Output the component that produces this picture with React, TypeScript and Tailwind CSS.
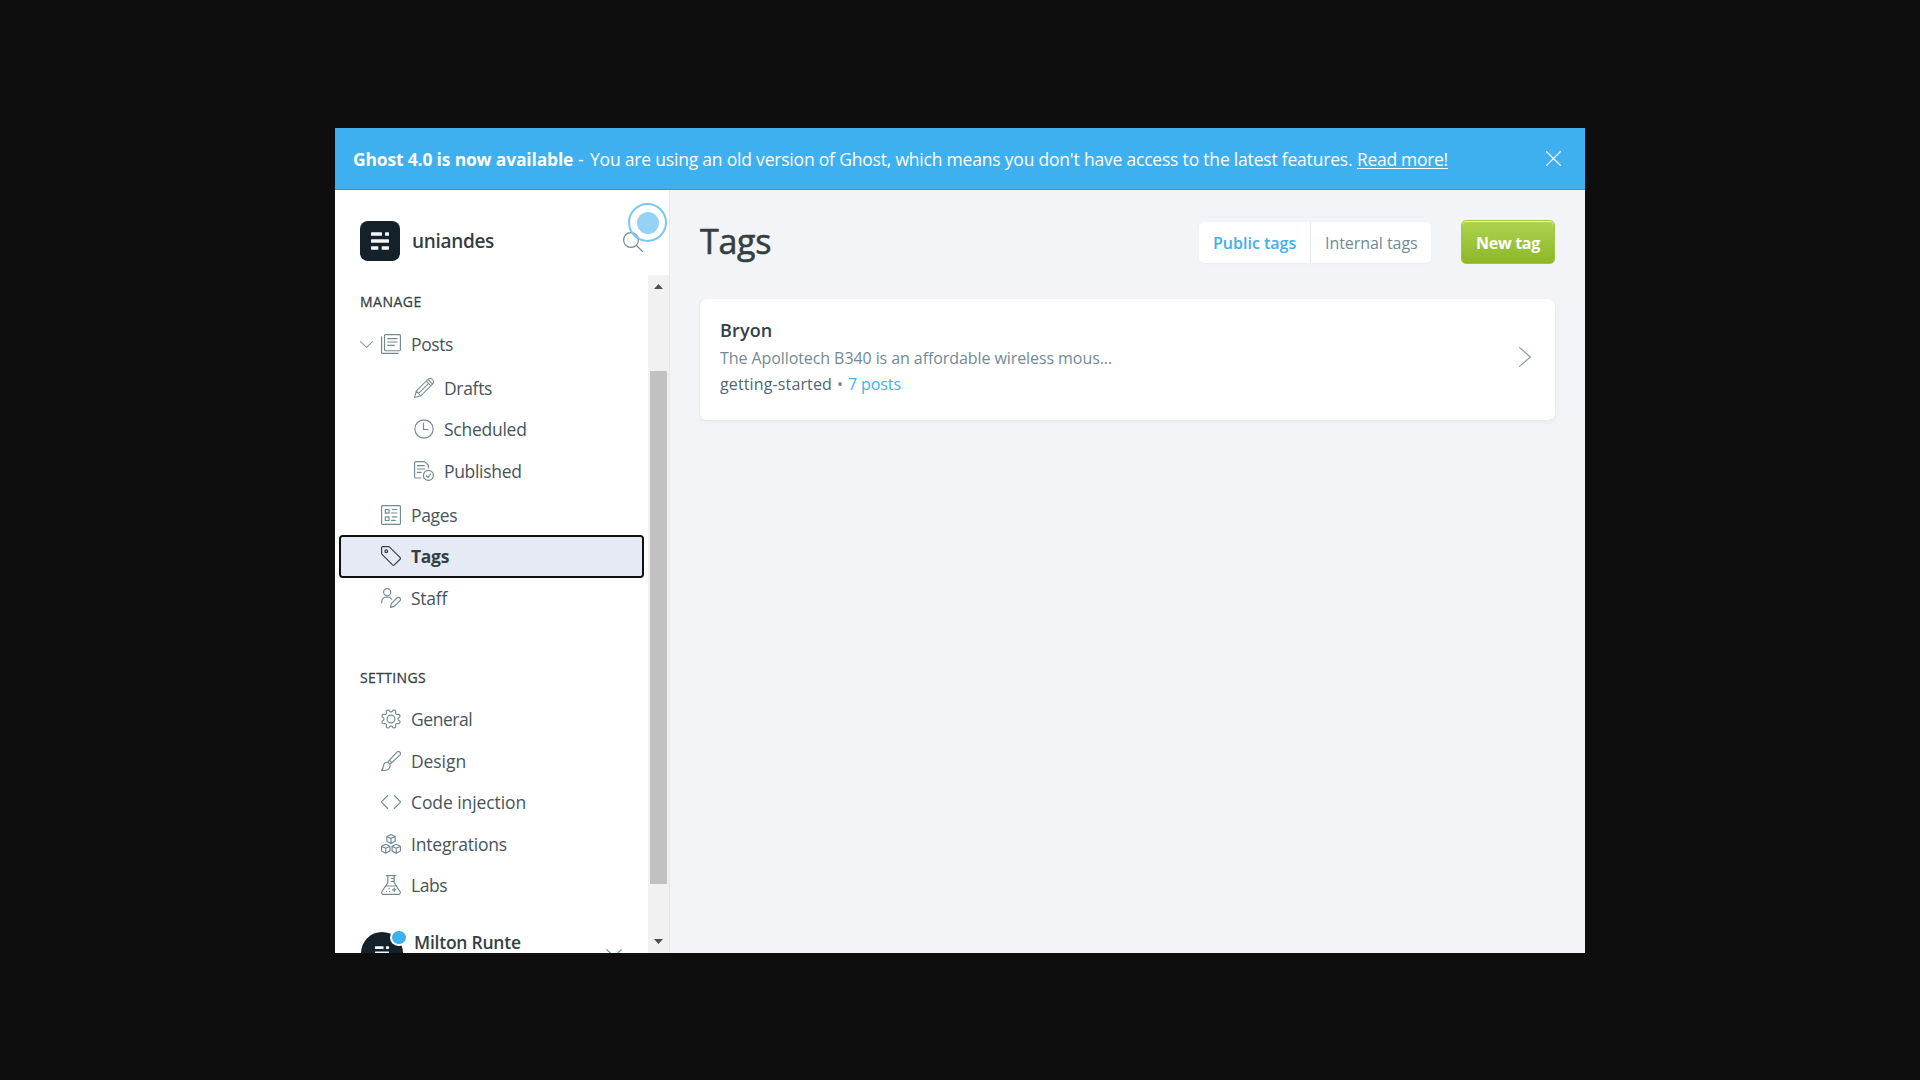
import type { ReactNode } from "react";

function Icon({ children, className = "" }: { children: ReactNode; className?: string }) {
  return (
    <svg
      viewBox="0 0 24 24"
      fill="none"
      stroke="currentColor"
      strokeWidth="1.4"
      strokeLinecap="round"
      strokeLinejoin="round"
      className={"size-5 shrink-0 " + className}
    >
      {children}
    </svg>
  );
}

const PostsIcon = () => (
  <Icon>
    <rect x="4.2" y=".7" width="19.100" height="19.400" rx="1.2" />
    <path d="M.7 3.4V21.800a1.5 1.5 0 0 0 1.5 1.5H20.6M8 5.600h11.400M8 9.600h11.400M8 13.600h8" />
  </Icon>
);

const PencilIcon = () => (
  <Icon>
    <path
      strokeWidth="1.25"
      d="M22.200 1.800a3.900 3.900 0 0 0-5.600 0L2.700 15.700.7 23.300l7.600-2L22.200 7.400a3.900 3.900 0 0 0 0-5.600zM14.700 3.700l5.600 5.600M16.700 1.700l5.600 5.600M2.700 15.700l5.600 5.600M17.500 6.500 5.500 18.500"
    />
  </Icon>
);

const ClockIcon = () => (
  <Icon>
    <circle cx="12" cy="12" r="11" />
    <path d="M11.400 5.200v7.400h5.200" />
  </Icon>
);

const PublishedIcon = () => (
  <Icon>
    <path d="M8.200 20.400H2.100A1.400 1.400 0 0 1 .7 19V2.100A1.400 1.400 0 0 1 2.100.7h10.800l4.300 4.300v3.200M4 5.600h8.400M4 9.600h9M4 13.600h4.600" />
    <circle cx="17.300" cy="17.300" r="6" />
    <path d="m20.200 15.600-3.300 4-2.300-1.900" />
  </Icon>
);

const PagesIcon = () => (
  <Icon>
    <rect x=".7" y=".7" width="22.600" height="22.600" rx="1" />
    <path d="M5.200 5.400h4.400v4.400H5.200zM5.200 14.200h4.400v4.400H5.200zM13.400 5.400h5.600M12.400 9.600h6.800M13.400 14.200h5.600M12.400 18.400h4.800" />
  </Icon>
);

const TagIcon = () => (
  <Icon>
    <path d="M.7 2.200V8.600a2 2 0 0 0 .6 1.400l12.500 12.700a1.600 1.600 0 0 0 2.200 0l6.800-6.800a1.600 1.600 0 0 0 0-2.200L10.300 1.300A2 2 0 0 0 8.900.7H2.200A1.500 1.500 0 0 0 .7 2.200z" />
    <circle cx="6.300" cy="6.300" r="1.600" />
  </Icon>
);

const StaffIcon = () => (
  <Icon>
    <circle cx="7.400" cy="5" r="4.300" />
    <path d="M.7 17.800c0-4.600 2.900-7.200 6.700-7.200 2.400 0 4.400 1 5.600 2.900M22.600 12a2.500 2.500 0 0 0-3.600 0l-6.500 6.700-1.300 4.600 4.700-1.300 6.700-6.500a2.500 2.500 0 0 0 0-3.500z" />
  </Icon>
);

// Eight rounded teeth, with a notch facing straight up.
const GEAR =
  "M" +
  Array.from({ length: 160 }, (_, i) => {
    const a = (i / 160) * Math.PI * 2;
    const r = 10 + 1.45 * Math.tanh(-2.2 * Math.cos(8 * a));
    return `${(12 + r * Math.sin(a)).toFixed(2)} ${(12 - r * Math.cos(a)).toFixed(2)}`;
  }).join("L") +
  "Z";

const GearIcon = () => (
  <Icon>
    <circle cx="12" cy="12" r="4.700" />
    <path d={GEAR} />
  </Icon>
);

const BrushIcon = () => (
  <Icon>
    <path d="M22.600 1.400a2.500 2.500 0 0 0-3.500 0l-9 9.500 3 3L22.600 4.900a2.500 2.500 0 0 0 0-3.500zM10.100 10.900l-1.900 2.600 2.300 2.300 2.600-1.900M8.200 13.500c-2.500-.2-4.700 1.300-5.100 3.800-.3 2.200-.9 4.500-2.400 5.700 2.400.5 6.200.4 8.200-1.300 1.800-1.500 2.400-3.800 1.600-5.900" />
  </Icon>
);

const CodeIcon = () => (
  <Icon>
    <path d="M8 4.200.8 11.600a.6.6 0 0 0 0 .8L8 19.800M16 4.200l7.200 7.400a.6.6 0 0 1 0 .8L16 19.800" />
  </Icon>
);

const CUBE = "m0-5.300 5 2.300v5.800L0 5.300l-5-2.500V-3zM-5-3 0-.700 5-3M0-.700v6";
const CubesIcon = () => (
  <Icon>
    <path d={CUBE} transform="translate(12 6)" />
    <path d={CUBE} transform="translate(5.700 17.700)" />
    <path d={CUBE} transform="translate(18.300 17.700)" />
  </Icon>
);

const FlaskIcon = () => (
  <Icon>
    <path d="M6.400.7h11.200M8.200.7v8.500L1.200 19.800c-1 1.600.1 3.500 2 3.500h17.600c1.900 0 3-1.900 2-3.500L15.800 9.200V.7M5.500 13.200h13M12.400 4.200h3.400M12.400 7.600h3.400M15.800 15.800v4M13.800 17.800h4" />
    <path d="M9.700 16.400h.1M6.700 19.600h.1M10.500 20h.1" strokeWidth="1.600" />
  </Icon>
);

const BrandMark = ({ className }: { className: string }) => (
  <svg viewBox="0 0 18 18" fill="#f4f6f7" className={className}>
    <rect x="0" y=".3" width="11" height="3.500" rx=".5" />
    <rect x="14" y=".3" width="4" height="3.500" rx=".5" />
    <rect x="0" y="7.200" width="18" height="3.500" rx=".5" />
    <rect x="0" y="14.200" width="7.300" height="3.500" rx=".5" />
    <rect x="10.700" y="14.200" width="7.300" height="3.500" rx=".5" />
  </svg>
);

function Row({
  icon,
  label,
  className = "",
  tracking,
  sub = false,
}: {
  icon: ReactNode;
  label: string;
  className?: string;
  tracking: string;
  sub?: boolean;
}) {
  return (
    <li
      className={
        "flex h-10 items-center text-[17.5px] text-[#47545a] " + (sub ? "pl-[79px] " : "pl-[46px] ") + className
      }
    >
      <span className="text-[#738a94]">{icon}</span>
      <span className={"relative top-px ml-[10px] whitespace-nowrap leading-none " + tracking}>{label}</span>
    </li>
  );
}

export default function App() {
  return (
    <div className="flex h-[1080px] w-[1920px] items-start justify-center overflow-hidden bg-[#0e0e0e] pt-32 font-['Open_Sans','Noto_Sans',sans-serif]">
      <div className="flex h-[825px] w-[1250px] flex-col overflow-hidden bg-[#f2f4f8]">
        <header className="flex h-[62px] shrink-0 items-center justify-between border-b border-[#1d9ae0] bg-[#3eb0ef] pr-6 pl-[18px] text-[17.5px] whitespace-nowrap text-white">
          <p className="flex items-center pt-0.5">
            <strong className="w-[225px] font-bold tracking-[-0.18px]">Ghost 4.0 is now available</strong>
            <span className="w-[12px]">-</span>
            <span className="w-[767px] tracking-[-0.2px]">
              You are using an old version of Ghost, which means you don't have access to the latest features.
            </span>
            <a className="tracking-[-0.3px] underline underline-offset-2">Read more!</a>
          </p>
          <svg
            viewBox="0 0 15 15"
            className="size-[15px] overflow-visible"
            stroke="#fff"
            strokeWidth="1.1"
            strokeLinecap="round"
          >
            <path d="M.5.5l14 14M14.500.5l-14 14" />
          </svg>
        </header>

        <div className="flex min-h-0 flex-1">
          <aside className="flex w-[335px] shrink-0 flex-col border-r border-[#e3e9ef] bg-white">
            <div className="relative flex h-[85px] shrink-0 items-start pt-[31px] pl-[25px]">
              <div className="flex size-10 items-center justify-center rounded-[8px] bg-[#15212a]">
                <BrandMark className="size-[18px]" />
              </div>
              <span className="ml-3 text-[19px] leading-[41px] font-semibold tracking-[-0.32px] text-[#343f44]">
                uniandes
              </span>
              <Icon className="mt-[11px] mr-[26px] ml-auto text-[#738a94]">
                <circle cx="9.600" cy="9.600" r="8.900" />
                <path d="M16.200 16.200l7.200 7.200" />
              </Icon>
              <span className="absolute top-[13px] left-[293px] flex size-[39px] items-center justify-center rounded-full border-2 border-[#78c8f4] bg-white/20">
                <span className="size-[22px] rounded-full bg-[#96d2f6]" />
              </span>
            </div>

            <div className="flex min-h-0 flex-1">
              <nav className="min-w-0 flex-1 overflow-hidden">
                <h4 className="mt-[17px] ml-[25px] text-[14px] leading-5 font-medium tracking-[0.5px] text-[#343f44] [-webkit-text-stroke:0.3px_#343f44]">
                  MANAGE
                </h4>
                <ul className="mt-[12px]">
                  <li className="flex h-10 items-center pl-[25px] text-[17.5px] text-[#47545a]">
                    <svg
                      viewBox="0 0 13 7"
                      fill="none"
                      stroke="#8a9ba4"
                      strokeWidth="1.1"
                      strokeLinecap="round"
                      strokeLinejoin="round"
                      className="mr-2 h-[7px] w-[13px]"
                    >
                      <path d="M.6.7l5.900 5.600L12.400.7" />
                    </svg>
                    <span className="text-[#738a94]">
                      <PostsIcon />
                    </span>
                    <span className="relative top-px ml-[10px] leading-none tracking-[-0.4px]">Posts</span>
                  </li>
                  <Row sub icon={<PencilIcon />} label="Drafts" className="mt-1" tracking="tracking-[-0.33px]" />
                  <Row sub icon={<ClockIcon />} label="Scheduled" className="mt-px" tracking="tracking-[-0.26px]" />
                  <Row sub icon={<PublishedIcon />} label="Published" className="mt-0.5" tracking="tracking-[-0.32px]" />
                  <Row icon={<PagesIcon />} label="Pages" className="mt-1" tracking="tracking-[-0.35px]" />
                  <li className="mr-1 ml-1 h-[43px] rounded-[4px] border-2 border-[#101010] bg-white text-[17.5px] font-bold text-[#343f44]">
                    <span className="flex h-full items-center rounded-[3px] bg-[#e5eaf4] pb-px pl-10">
                      <TagIcon />
                      <span className="relative top-px ml-[10px] leading-none tracking-[-0.3px]">Tags</span>
                    </span>
                  </li>
                  <Row icon={<StaffIcon />} label="Staff" tracking="tracking-[-0.25px]" />
                </ul>
                <h4 className="mt-[50px] ml-[25px] text-[14px] leading-5 font-medium tracking-[0.35px] text-[#343f44] [-webkit-text-stroke:0.3px_#343f44]">
                  SETTINGS
                </h4>
                <ul className="mt-[11px]">
                  <Row icon={<GearIcon />} label="General" tracking="tracking-[-0.45px]" />
                  <Row icon={<BrushIcon />} label="Design" className="mt-0.5" tracking="tracking-[-0.08px]" />
                  <Row icon={<CodeIcon />} label="Code injection" className="mt-px" tracking="tracking-[-0.09px]" />
                  <Row icon={<CubesIcon />} label="Integrations" className="mt-0.5" tracking="tracking-[-0.2px]" />
                  <Row icon={<FlaskIcon />} label="Labs" className="mt-px" tracking="tracking-[-0.45px]" />
                </ul>
                <div className="mt-[27px] flex items-start pl-[26px]">
                  <div className="relative flex size-[42px] shrink-0 items-center justify-center rounded-full bg-[#15212a]">
                    <BrandMark className="h-[14px] w-[14px]" />
                    <span className="absolute -top-[3px] left-[29px] h-[17px] w-[18px] rounded-full border-2 border-white bg-[#3eb0ef]" />
                  </div>
                  <span className="ml-[11px] text-[17.5px] leading-5 font-semibold tracking-[-0.23px] text-[#343f44]">
                    Milton Runte
                  </span>
                  <svg
                    viewBox="0 0 16 8"
                    fill="none"
                    stroke="#738a94"
                    strokeWidth="1.1"
                    className="mt-[17px] mr-[26px] ml-auto h-2 w-4"
                  >
                    <path d="M.5.5 8 7.500l7.500-7" />
                  </svg>
                </div>
              </nav>
              <div className="flex w-[21px] flex-col items-center bg-[#f1f1f1]">
                <svg viewBox="0 0 9 5" fill="#505050" className="mt-[9px] h-[5px] w-[9px]">
                  <path d="M0 5 4.500 0 9 5z" />
                </svg>
                <div className="mt-[82px] h-[513px] w-[17px] bg-[#c1c1c1]" />
                <svg viewBox="0 0 9 5" fill="#505050" className="mt-auto mb-[9px] h-[5px] w-[9px]">
                  <path d="M0 0l4.500 5L9 0z" />
                </svg>
              </div>
            </div>
          </aside>

          <main className="min-w-0 flex-1 pr-[30px] pl-[30px]">
            <div className="flex h-[109px] items-start pt-[30px]">
              <h2 className="text-[34px] leading-[42px] font-medium tracking-[-0.3px] text-[#343f44] [-webkit-text-stroke:0.6px_#343f44]">
                Tags
              </h2>
              <div className="mt-[2px] ml-auto flex h-[41px] rounded-[5px] bg-white text-[16px] leading-[43px] whitespace-nowrap shadow-[0_1px_2px_rgba(0,0,0,0.04)]">
                <span className="w-[112px] border-r border-[#e5eaf0] pl-[14px] font-semibold text-[#3eb0ef]">
                  Public tags
                </span>
                <span className="w-[120px] pl-[14px] tracking-[-0.05px] text-[#738a94]">Internal tags</span>
              </div>
              <button className="ml-[30px] h-11 w-[94px] rounded-[5px] border border-[#9fc93c] bg-linear-to-b from-[#aed350] to-[#8db725] pt-0.5 text-[16px] font-bold tracking-[-0.3px] whitespace-nowrap text-white shadow-[inset_0_1px_0_rgba(255,255,255,0.75)]">
                New tag
              </button>
            </div>
            <section className="flex h-[121px] items-start justify-between rounded-[6px] bg-white pt-5 pr-6 pl-5 shadow-[0_0_1px_rgba(0,0,0,0.12),0_2px_4px_rgba(0,0,0,0.05)]">
              <div className="text-[16px] whitespace-nowrap">
                <h3 className="text-[18px] leading-[22px] font-semibold tracking-[0.15px] text-[#343f44]">Bryon</h3>
                <p className="mt-[4px] leading-[26px] tracking-[-0.08px] text-[#738a94]">
                  The Apollotech B340 is an affordable wireless mous...
                </p>
                <p className="flex leading-[26px] text-[#738a94]">
                  <span className="tracking-[0.13px] text-[#54666d]">getting-started</span>
                  <span className="w-4 text-center">•</span>
                  <span className="tracking-[-0.09px] text-[#3eb0ef]">7 posts</span>
                </p>
              </div>
              <svg
                viewBox="0 0 12 20"
                fill="none"
                stroke="#8b9ca5"
                strokeWidth="1.2"
                strokeLinecap="round"
                strokeLinejoin="round"
                className="mt-7 h-5 w-3"
              >
                <path d="M.6.6 11.400 10 .6 19.400" />
              </svg>
            </section>
          </main>
        </div>
      </div>
    </div>
  );
}
